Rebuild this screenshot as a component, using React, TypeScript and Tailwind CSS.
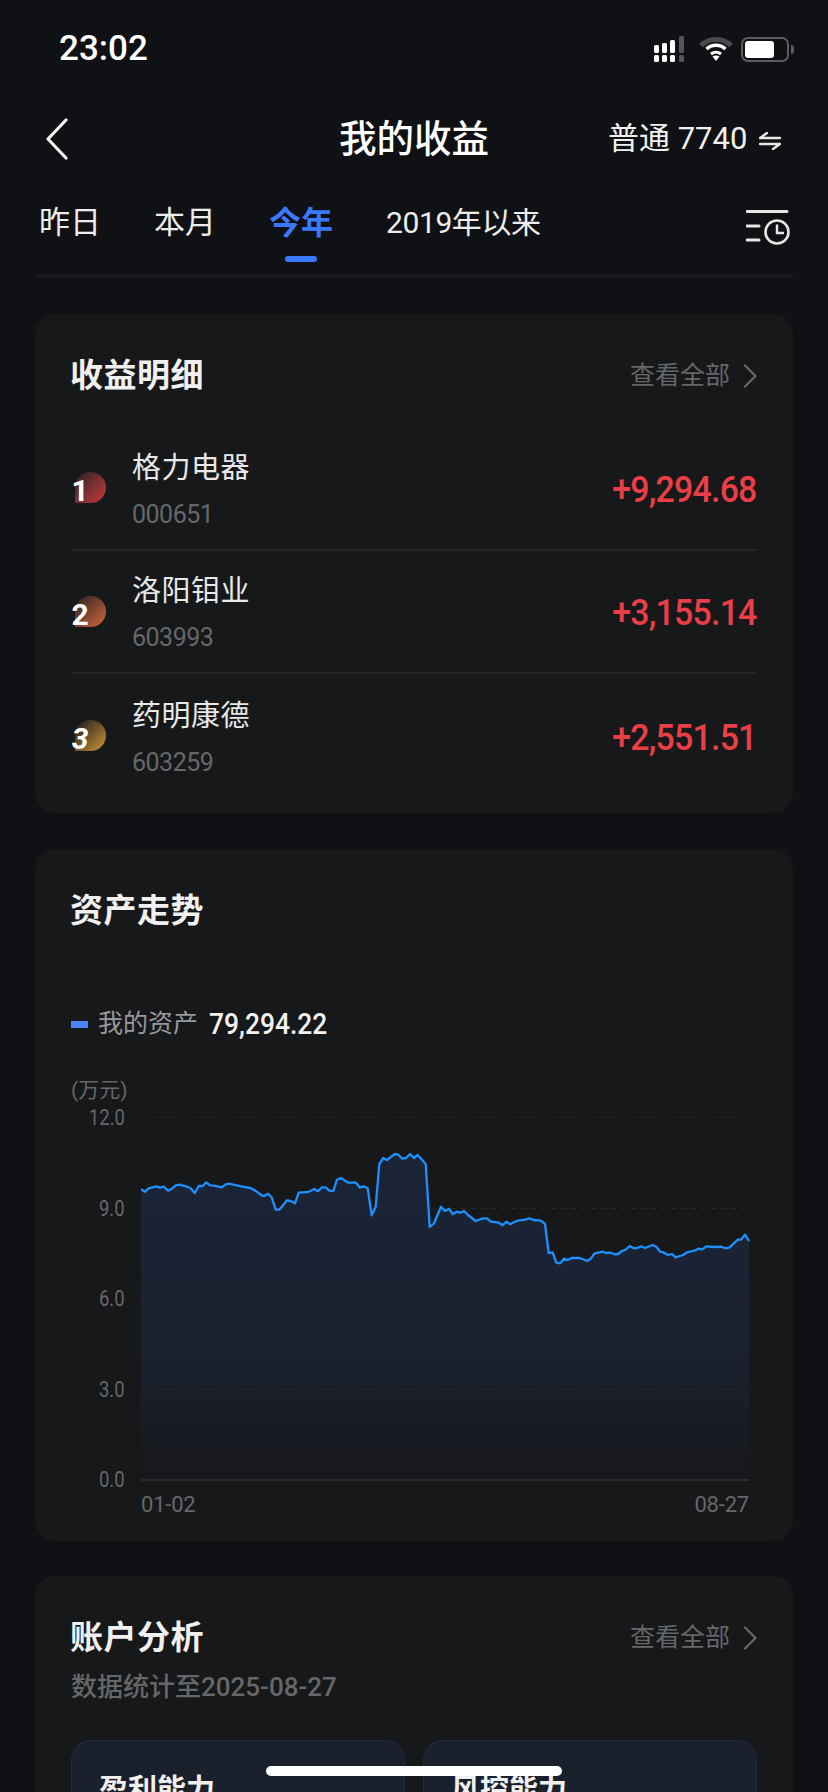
const CJK = "font-['Roboto','Noto_Sans_CJK_SC',sans-serif]";

const p1: [number, number][] = [[303,598],[315,605],[326,595],[349,589],[360,593],[372,590],[384,602],[396,596],[407,586],[418,584],[441,590],[452,595],[464,609],[476,588],[488,588],[499,577],[511,586],[523,587],[545,592],[557,583],[568,581],[580,584],[603,589],[631,594],[643,600],[665,616],[672,618],[684,611],[695,622],[707,659],[718,659],[741,631],[752,633],[765,640],[776,608],[787,607],[805,606],[823,597],[834,604],[846,592],[857,592],[868,602],[880,603],[891,569],[903,564],[925,578],[948,578],[960,593],[971,589],[983,595],[995,676],[1007,650],[1018,522],[1030,504],[1041,510],[1064,492],[1075,494],[1087,506],[1098,504],[1110,492],[1122,504],[1133,495],[1157,522]];
const p2: [number, number][] = [[5,381],[18,370],[39,320],[51,333],[63,326],[74,342],[86,335],[97,338],[108,333],[120,345],[143,363],[165,355],[177,355],[189,365],[212,368],[224,376],[235,365],[247,373],[259,366],[270,362],[292,359],[304,355],[316,360],[339,362],[351,372],[362,459],[374,457],[385,488],[397,490],[408,476],[419,480],[431,474],[455,474],[478,483],[488,476],[500,460],[525,455],[535,459],[548,458],[560,463],[570,462],[582,453],[593,449],[605,438],[617,445],[628,444],[640,439],[651,444],[674,435],[685,440],[697,455],[708,458],[720,465],[732,462],[743,472],[765,465],[777,457],[800,452],[811,446],[823,448],[835,439],[858,441],[880,440],[892,445],[905,442],[928,420],[940,418],[951,404],[963,423]];
const pts = [
  ...p1.map(([x, y]) => [40 + x / 3 - 141, 990 + y / 3 - 1110]),
  ...p2.map(([x, y]) => [428 + x / 3 - 141, 1100 + y / 3 - 1110]),
].map(([x, y]) => `${x.toFixed(1)},${y.toFixed(1)}`);
const line = pts.join(" ");
const area = `M0,370 L${pts.join(" L")} L608,370 Z`;

function StatusIcons() {
  return (
    <div className="flex items-center">
      <svg width="34" height="26" viewBox="0 0 34 26" fill="#fff">
        <rect x="1" y="19" width="5" height="7" rx="1.5" />
        <rect x="9" y="19" width="5" height="7" rx="1.5" />
        <rect x="17" y="19" width="5" height="7" rx="1.5" />
        <rect x="26" y="19" width="5" height="7" rx="1.5" fill="#55565a" />
        <rect x="1" y="9" width="5" height="8" rx="1.5" />
        <rect x="9" y="7" width="5" height="10" rx="1.5" />
        <rect x="17" y="4" width="5" height="13" rx="1.5" />
        <rect x="26" y="0" width="5" height="17" rx="1.5" fill="#55565a" />
      </svg>
      <svg className="ml-[12px]" width="34" height="26" viewBox="0 0 34 26" fill="none">
        <path d="M2 9.5C10 1.5 24 1.5 32 9.5" stroke="#4a4b4f" strokeWidth="5" />
        <path d="M7.5 13C13 8 21 8 26.5 13" stroke="#fff" strokeWidth="3.5" />
        <path d="M12 18C15 15.5 19 15.5 22 18" stroke="#fff" strokeWidth="3" />
        <path d="M13.5 20.5L17 25L20.5 20.5C18.5 19 15.5 19 13.5 20.5Z" fill="#fff" />
      </svg>
      <div className="ml-[8px] flex items-center">
        <div className="w-[48px] h-[25px] rounded-[7px] border-2 border-[#5b5c60] p-[2px]">
          <div className="w-[29px] h-full rounded-[3px] bg-white" />
        </div>
        <div className="ml-[2px] w-[3px] h-[9px] rounded-r-[3px] bg-[#5b5c60]" />
      </div>
    </div>
  );
}

function Chevron({ color = "#66676a" }: { color?: string }) {
  return (
    <svg width="14" height="24" viewBox="0 0 14 24" fill="none">
      <path d="M2 1.5L12.5 12L2 22.5" stroke={color} strokeWidth="2.2" strokeLinecap="round" strokeLinejoin="round" />
    </svg>
  );
}

function More() {
  return (
    <div className="flex items-center">
      <span className="text-[25px] leading-[30px] text-[#66676a]">查看全部</span>
      <span className="ml-[13px] flex"><Chevron /></span>
    </div>
  );
}

const rows = [
  { n: "1", name: "格力电器", code: "000651", val: "+9,294.68", cls: "from-[#2a2022] to-[#cf3339]", num: "" },
  { n: "2", name: "洛阳钼业", code: "603993", val: "+3,155.14", cls: "from-[#2a2220] to-[#d9683a]", num: "" },
  { n: "3", name: "药明康德", code: "603259", val: "+2,551.51", cls: "from-[#1d1b18] to-[#d39a32]", num: "italic font-black" },
];

function Row({ r, last }: { r: (typeof rows)[number]; last: boolean }) {
  return (
    <div className={`h-[123.5px] flex items-center ${last ? "" : "border-b-2 border-[#242528]"}`}>
      <div className="relative w-[61px] h-[31px] shrink-0">
        <div className={`absolute left-[4px] top-0 w-[31px] h-[31px] rounded-full rounded-bl-none bg-gradient-to-br ${r.cls}`} />
        <span className={`absolute left-[0px] top-[1px] w-[18px] text-center text-[30px] leading-[36px] font-bold text-white font-['Roboto',sans-serif] ${r.num}`}>{r.n}</span>
      </div>
      <div className="flex flex-col pt-[5px]">
        <span className="text-[29px] leading-[34px] tracking-[0.5px] text-[#e8e8e9]">{r.name}</span>
        <span className="mt-[15px] text-[25px] leading-[30px] text-[#66676a] tracking-[-0.5px]">{r.code}</span>
      </div>
      <span className="ml-auto text-[36px] leading-[40px] font-medium text-[#ea3f46] tracking-[-0.8px] mt-[4px] scale-x-[0.94] origin-right">{r.val}</span>
    </div>
  );
}

export default function App() {
  return (
    <div className={`relative h-[1792px] overflow-hidden bg-[#101114] ${CJK}`}>
      {/* status bar */}
      <div className="h-[100px] pl-[59px] pr-[34px] pt-[31px] flex items-start justify-between">
        <span className="text-[35px] leading-[36px] font-medium text-white font-['Roboto',sans-serif]">23:02</span>
        <div className="pt-[5px]"><StatusIcons /></div>
      </div>

      {/* nav */}
      <div className="relative h-[78px] flex items-center justify-center">
        <svg className="absolute left-[45px] top-[18px]" width="24" height="42" viewBox="0 0 24 42" fill="none">
          <path d="M21 2L3 21L21 40" stroke="#f0f0f0" strokeWidth="3.2" strokeLinecap="round" strokeLinejoin="round" />
        </svg>
        <span className="text-[37.5px] leading-[44px] font-medium text-white">我的收益</span>
        <div className="absolute left-[608px] top-[21px] flex items-center">
          <span className="text-[31px] leading-[36px] text-[#efefef]">普通 7740</span>
          <svg className="ml-[12px] mt-[3px]" width="22" height="18" viewBox="0 0 22 18" fill="none">
            <path d="M1 6H21M1 6L8 1M1 12H21M21 12L14 17" stroke="#e8e8e8" strokeWidth="2.4" strokeLinecap="round" />
          </svg>
        </div>
      </div>

      {/* tabs */}
      <div className="h-[95px] pl-[39px] pr-[38px] pt-[25px] flex items-start">
        <span className="text-[31px] leading-[40px] text-[#ededed]">昨日</span>
        <span className="ml-[53px] text-[31px] leading-[40px] text-[#ededed]">本月</span>
        <div className="ml-[53px] flex flex-col items-center">
          <span className="text-[32px] leading-[40px] font-bold text-[#3a78ff]">今年</span>
          <div className="mt-[13px] w-[32px] h-[6px] rounded-full bg-[#3a78ff]" />
        </div>
        <span className="ml-[53px] text-[30px] leading-[40px] text-[#ededed] tracking-[-0.4px]">2019年以来</span>
        <svg className="ml-auto mt-[6px]" width="44" height="36" viewBox="0 0 44 36" fill="none">
          <path d="M1 2.5H41M1 17H13M1 31H13" stroke="#e6e6e6" strokeWidth="3" strokeLinecap="round" />
          <circle cx="31" cy="23" r="11.5" stroke="#e6e6e6" strokeWidth="2.6" />
          <path d="M31 15.5V24H38" stroke="#e6e6e6" strokeWidth="2.4" />
        </svg>
      </div>

      <div className="mx-[35px] h-[5px] bg-[#17181b]" />

      {/* card 1 */}
      <div className="mx-[35px] mt-[36px] h-[499px] rounded-[20px] bg-[#17181a] px-[36px] pt-[42px]">
        <div className="flex items-center justify-between h-[40px]">
          <span className="text-[33px] leading-[40px] font-semibold text-[#f0f0f0] tracking-[0.5px] -ml-[1px]">收益明细</span>
          <More />
        </div>
        <div className="mt-[31px]">
          {rows.map((r, i) => <Row key={r.n} r={r} last={i === 2} />)}
        </div>
      </div>

      {/* card 2 */}
      <div className="mx-[35px] mt-[36px] h-[692px] rounded-[20px] bg-[#17181a] pl-[36px] pr-[36px] pt-[42px]">
        <span className="block text-[33px] leading-[40px] font-semibold text-[#f0f0f0] tracking-[0.5px] -ml-[1px]">资产走势</span>
        <div className="mt-[78px] h-[30px] flex items-center">
          <div className="w-[17px] h-[7px] bg-[#4a86ff]" />
          <span className="ml-[10px] text-[25px] leading-[30px] text-[#98999c]">我的资产</span>
          <span className="ml-[11px] text-[29px] leading-[30px] font-medium text-[#f2f2f2] scale-x-[0.91] origin-left">79,294.22</span>
        </div>
        <div className="mt-[39px] flex">
          <div className="w-[54px] shrink-0 flex flex-col">
            <span className="text-[21px] leading-[24px] text-[#66676a] whitespace-nowrap">(万元)</span>
            <div className="mt-[4px] h-[386px] flex flex-col justify-between items-end text-[22px] leading-[24px] text-[#66676a]">
              <span className="scale-x-[0.84] origin-right">12.0</span>
              <span className="scale-x-[0.84] origin-right">9.0</span>
              <span className="scale-x-[0.84] origin-right">6.0</span>
              <span className="scale-x-[0.84] origin-right">3.0</span>
              <span className="scale-x-[0.84] origin-right">0.0</span>
            </div>
          </div>
          <div className="ml-[16px] pt-[32px]">
            <svg width="612" height="374" viewBox="0 0 612 374" fill="none" className="block">
              <defs>
                <linearGradient id="a" x1="0" y1="40" x2="0" y2="370" gradientUnits="userSpaceOnUse">
                  <stop offset="0" stopColor="#1b2538" />
                  <stop offset="0.6" stopColor="#1a2130" />
                  <stop offset="1" stopColor="#17181b" />
                </linearGradient>
              </defs>
              <path d={area} fill="url(#a)" />
              {[7.5, 98.5, 189, 279.5].map((y) => (
                <line key={y} x1="0" x2="604" y1={y} y2={y} stroke="#26282c" strokeWidth="1" strokeDasharray="5 5" />
              ))}
              <polyline points={line} stroke="#1e90ff" strokeWidth="2.3" strokeLinejoin="round" />
              <line x1="0" x2="608" y1="370" y2="370" stroke="#2b2c2f" strokeWidth="2" />
            </svg>
            <div className="w-[608px] flex justify-between text-[22px] leading-[24px] text-[#66676a] mt-[9px] tracking-[-0.2px]">
              <span>01-02</span>
              <span>08-27</span>
            </div>
          </div>
        </div>
      </div>

      {/* card 3 */}
      <div className="mx-[35px] mt-[35px] h-[400px] rounded-[20px] bg-[#17181a] px-[36px] pt-[42px]">
        <div className="flex items-center justify-between h-[40px]">
          <span className="text-[33px] leading-[40px] font-semibold text-[#f0f0f0] tracking-[0.5px] -ml-[1px]">账户分析</span>
          <More />
        </div>
        <div className="mt-[14px] text-[26px] leading-[30px] font-medium text-[#66676a]">数据统计至2025-08-27</div>
        <div className="mt-[38px] grid grid-cols-2 gap-[18px]">
          {["盈利能力", "风控能力"].map((t) => (
            <div key={t} className="h-[200px] rounded-[20px] border border-[#1f2b47] bg-[#1a202c] pl-[27px] pt-[31px]">
              <span className="text-[29px] leading-[36px] font-semibold text-[#f0f0f0]">{t}</span>
            </div>
          ))}
        </div>
      </div>

      {/* home indicator */}
      <div className="absolute left-[266px] top-[1766px] w-[296px] h-[10px] rounded-full bg-white" />
    </div>
  );
}
